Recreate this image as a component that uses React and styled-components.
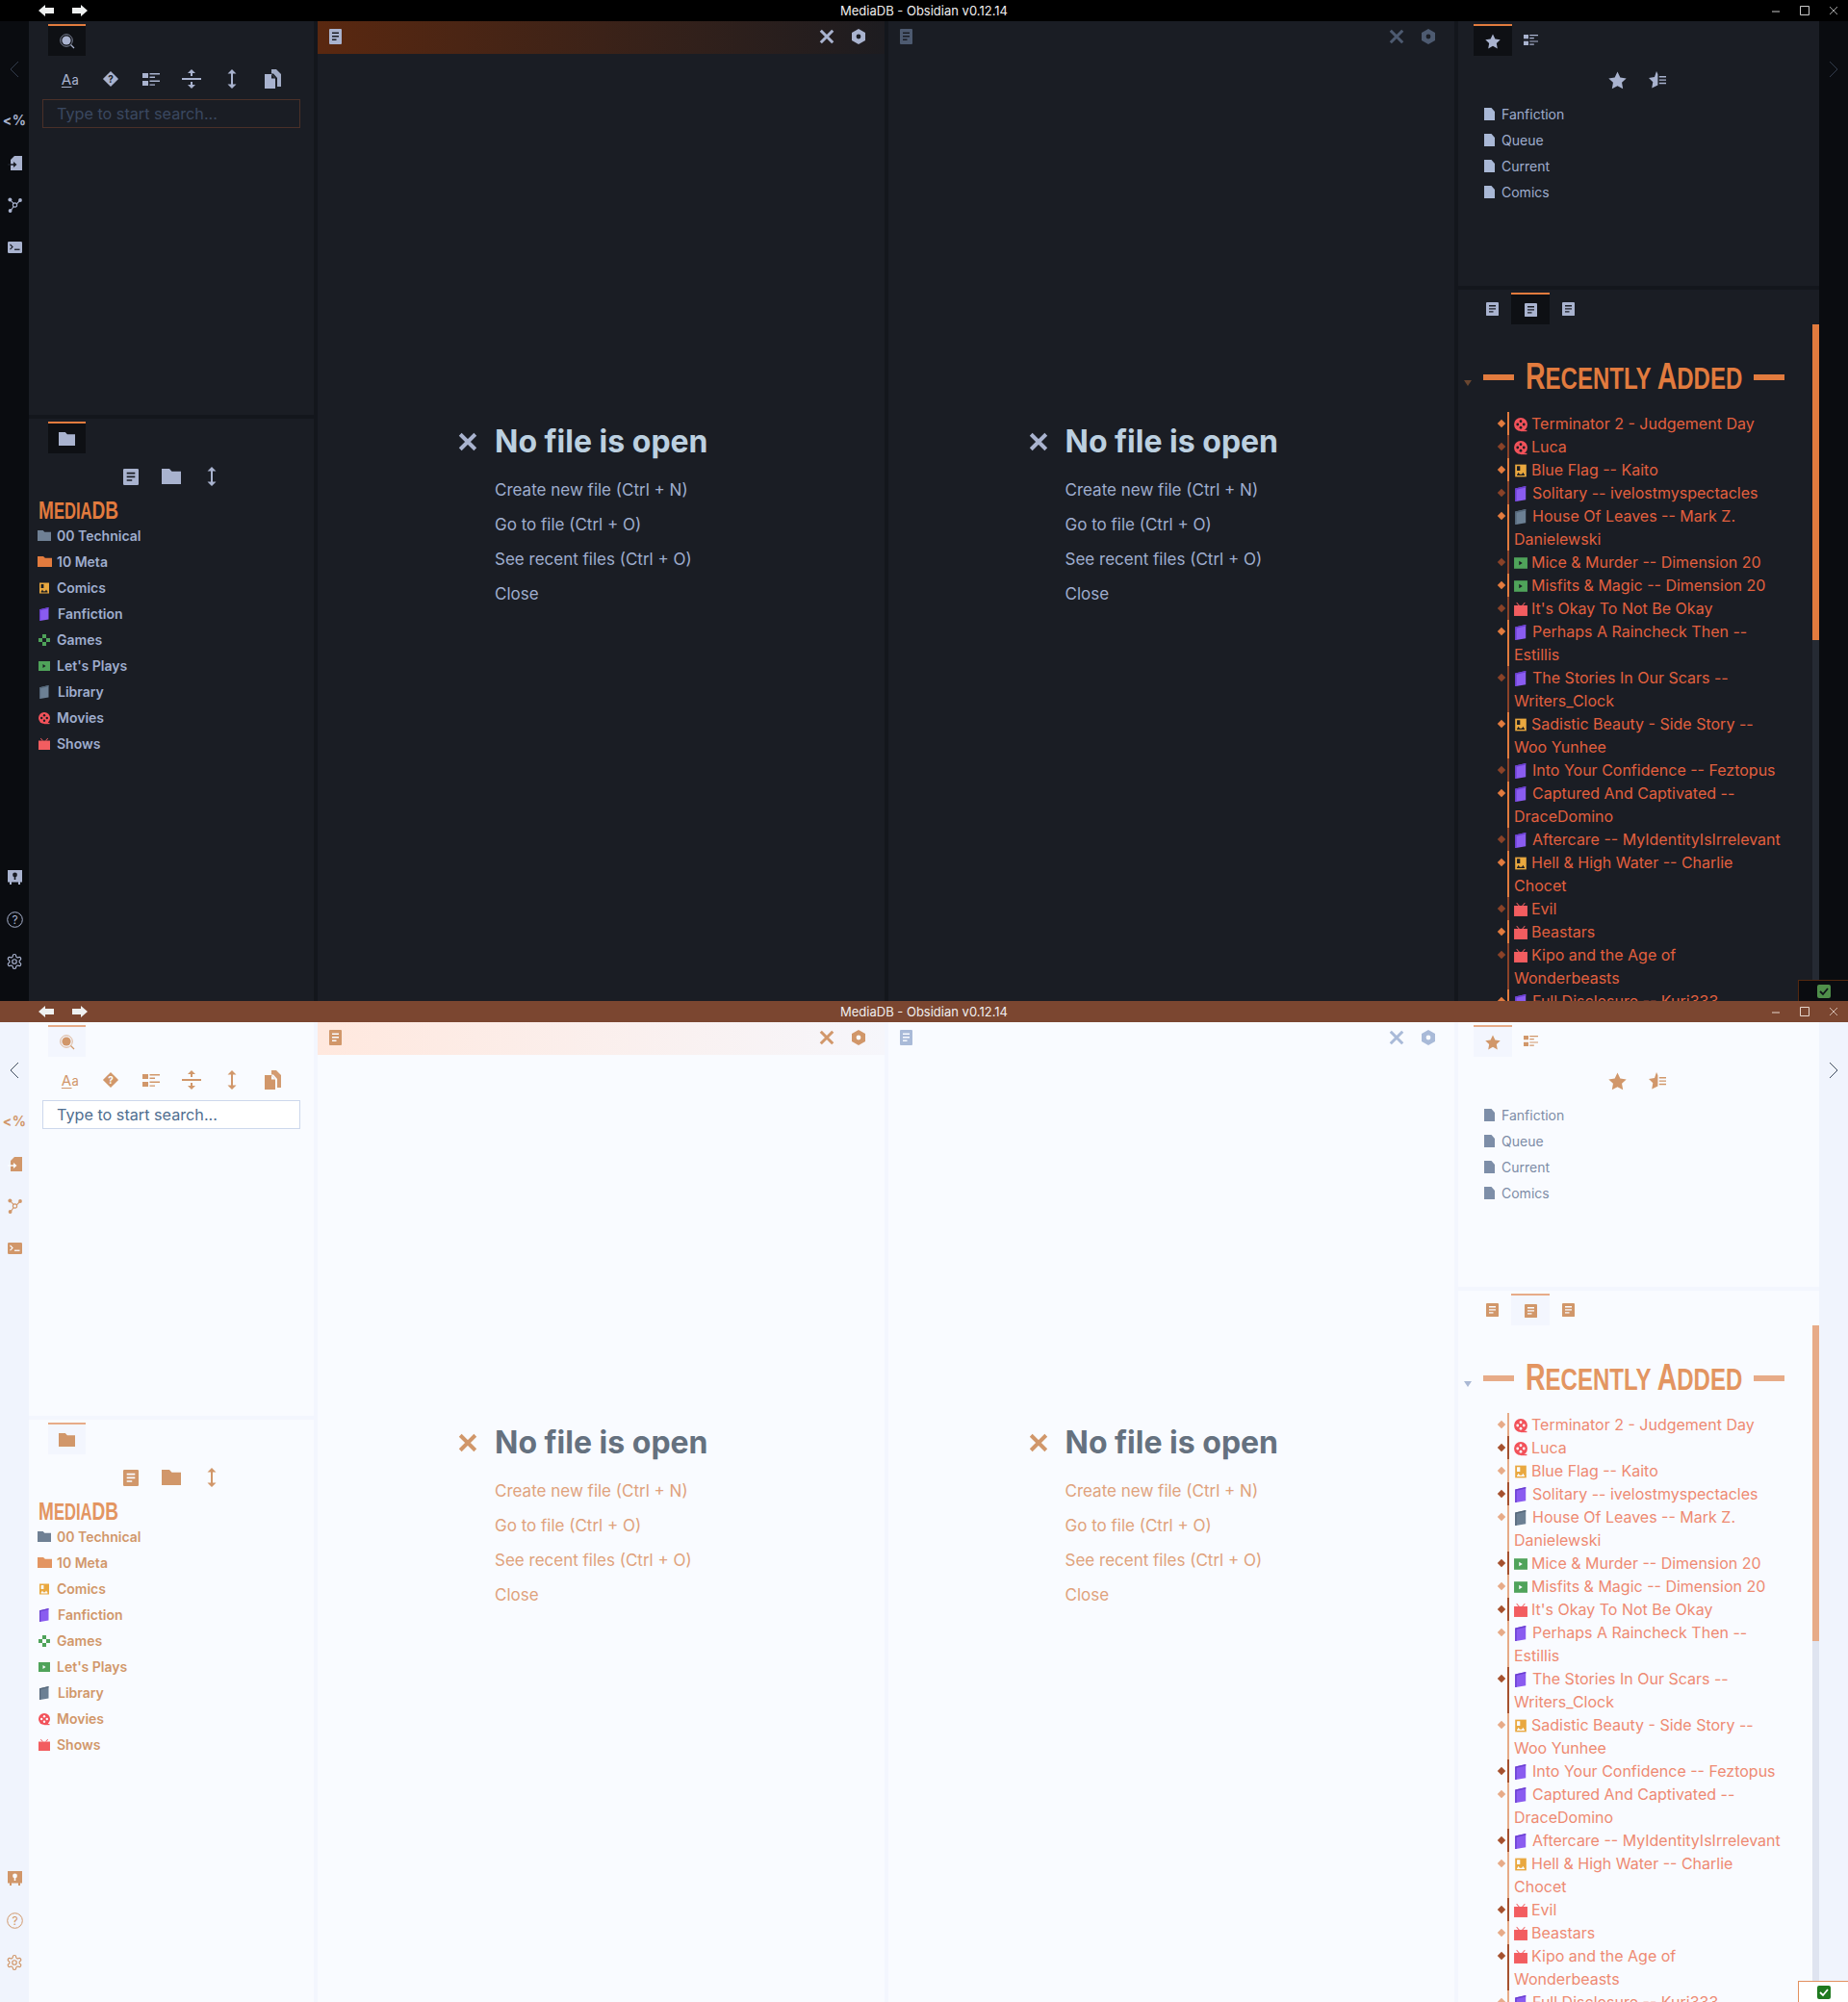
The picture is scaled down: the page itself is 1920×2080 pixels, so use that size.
import React from "react";
import styled, { createGlobalStyle, ThemeProvider } from "styled-components";

const dark = {
  title: "#000000", ribbon: "#0a0c10", bg: "#1a1d24", strip: "#0f1216", strip2: "#13161c", tabActive: "#0e1014",
  icon: "#a9b3cf", iconDim: "#4d5a70", chevron: "#323c4c", accent: "#e27b3e", accentDim: "#8a4228",
  text: "#9fadce", favIcon: "#a9b8d6", favText: "#9fadce", heading: "#bcd0e0", link: "#9fadce",
  listText: "#e2603f", h1: "#e27b3e", barH: "#e27b3e", caret: "#6a4630", thumb: "#e27b3e", track: "#252a33",
  inputBorder: "#4a3028", placeholder: "#3a4860", inputBg: "transparent",
  paneHead: "linear-gradient(90deg,#5a2810,#1d1c20)", statusBg: "#0a0c10", statusBorder: "#54280f", check: "#4f8f4a", checkMark: "#10161a",
  winCtl: "#c8c8c8", docFg: "#1a1d24", closeX: "#a9b3cf",
};
const light = {
  title: "#7b4630", ribbon: "#f0f4fd", bg: "#f9fbff", strip: "#f3f6fe", strip2: "#f3f6fe", tabActive: "#f3f6fe",
  icon: "#d1976a", iconDim: "#a9bad8", chevron: "#3d4a60", accent: "#e7ab88", accentDim: "#a5512f",
  text: "#d1976a", favIcon: "#7d8ea8", favText: "#7d8ca6", heading: "#65717f", link: "#e0a27c",
  listText: "#ee8a72", h1: "#e39561", barH: "#e7ab88", caret: "#aab8d4", thumb: "#e7ab88", track: "#dfe4f0",
  inputBorder: "#cdd8ec", placeholder: "#4f6e90", inputBg: "#ffffff",
  paneHead: "linear-gradient(90deg,#ffe8de,#f6f6fb)", statusBg: "#ffffff", statusBorder: "#e2905f", check: "#1f7a1f", checkMark: "#ffffff",
  winCtl: "#e6d6cc", docFg: "#f9fbff", closeX: "#d1976a",
};

const Global = createGlobalStyle`
  html, body { margin: 0; padding: 0; background: #f9fbff; }
  #root { width: 1920px; height: 2080px; overflow: hidden; }
  * { box-sizing: border-box; }
`;

const Win = styled.div`
  width: 1920px; height: 1040px; display: flex; flex-direction: column; overflow: hidden;
  font-family: Inter, "Liberation Sans", sans-serif; background: ${p => p.theme.bg};
`;
const TitleBar = styled.div`
  height: 22px; flex: none; position: relative; background: ${p => p.theme.title};
  display: flex; align-items: center; justify-content: center;
  color: #f0eeee; font: 13px Inter, "Liberation Sans", sans-serif;
`;
const NavGroup = styled.div`
  position: absolute; left: 40px; top: 5px; display: flex; gap: 19px; color: #eef0f0;
`;
const WinCtls = styled.div`
  position: absolute; right: 0; top: 0; height: 22px; display: flex; color: ${p => p.theme.winCtl};
`;
const WinCtl = styled.div`
  width: 30px; height: 22px; display: flex; align-items: center; justify-content: center;
`;
const Body = styled.div`
  flex: 1; display: flex; min-height: 0; position: relative;
`;
const Ribbon = styled.div`
  width: 30px; flex: none; background: ${p => p.theme.ribbon}; display: flex; flex-direction: column; align-items: center;
  padding-top: 41px; color: ${p => p.theme.icon};
`;
const Chevron = styled.div`
  height: 18px; color: ${p => p.theme.chevron}; margin-bottom: 34px; display: flex;
`;
const RibbonList = styled.div`
  display: flex; flex-direction: column; align-items: center; gap: 24px;
`;
const RibbonBottom = styled(RibbonList)`
  margin-top: auto; margin-bottom: 31px;
`;
const RibbonSlot = styled.div`
  height: 20px; display: flex; align-items: center; justify-content: center;
`;
const Tpl = styled.span`
  font: 700 14px/20px Inter, sans-serif; letter-spacing: .4px;
`;
const Side = styled.div`
  width: ${p => p.$w}px; flex: none; display: flex; flex-direction: column; background: ${p => p.theme.strip2};
`;
const Panel = styled.div`
  background: ${p => p.theme.bg}; position: relative; overflow: hidden;
  ${p => p.$h ? `height:${p.$h}px;flex:none;margin-bottom:4px;` : "flex:1;min-height:0;"}
`;
const Tabs = styled.div`
  display: flex; padding: ${p => p.$top}px 0 0 ${p => p.$left}px; height: ${p => p.$top + 33}px;
`;
const Tab = styled.div`
  width: ${p => p.$w || 39}px; height: 33px; display: flex; align-items: center; justify-content: center; color: ${p => p.theme.icon};
  ${p => p.$on ? `background:${p.theme.tabActive};border-top:2px solid ${p.theme.accent};` : ""}
`;
const ToolRow = styled.div`
  display: flex; color: ${p => p.theme.icon}; align-items: center; height: 24px;
  margin-top: ${p => p.$mt}px; padding-left: ${p => p.$pl}px; gap: ${p => p.$gap}px;
`;
const ToolSlot = styled.div`
  width: 20px; height: 24px; display: flex; align-items: center; justify-content: center; flex: none;
`;
const Aa = styled.span`
  display: inline-flex; align-items: baseline; font: 400 13px/1 Inter, sans-serif; letter-spacing: .3px;
  & b { font-weight: 400; font-size: 15px; text-decoration: underline; text-underline-offset: 2px; }
`;
const Search = styled.div`
  margin: 9px 0 0 14px; width: 268px; height: 30px; border: 1px solid ${p => p.theme.inputBorder}; background: ${p => p.theme.inputBg};
  padding: 0 0 0 14px; font: 400 16.2px/28px Inter, sans-serif; color: ${p => p.theme.placeholder};
`;
const VaultTitle = styled.div`
  margin: 11px 0 0 10px; height: 24px; color: ${p => p.theme.h1}; white-space: nowrap;
  font: 700 23px/24px "Liberation Sans", sans-serif; text-transform: uppercase;
`;
const VaultInner = styled.span`
  display: inline-block; transform: scaleX(.72); transform-origin: left center;
  & b { font-size: 26.5px; }
`;
const Tree = styled.div`
  margin-top: 1px; display: flex; flex-direction: column;
`;
const TreeRow = styled.div`
  height: 27px; display: flex; align-items: center; color: ${p => p.theme.text};
  font: 600 14px/27px Inter, sans-serif;
  padding-left: 9px;
`;
const TreeIcon = styled.span`
  width: ${p => p.$w}px; flex: none; display: flex; align-items: center;
`;
const FolderTint = styled.span`
  display: flex; color: ${p => p.$meta ? p.theme.h1 : "#6f8094"};
`;
const FavList = styled.div`
  margin-top: 10px; display: flex; flex-direction: column;
`;
const FavRow = styled.div`
  height: 27px; display: flex; align-items: center; gap: 7px; padding-left: 27px;
  font: 400 14px/27px Inter, sans-serif; color: ${p => p.theme.favText};
`;
const FavIcon = styled.span`
  display: flex; color: ${p => p.theme.favIcon};
`;
const Pane = styled.div`
  flex: 1; min-width: 0; display: flex; flex-direction: column; background: ${p => p.theme.bg};
`;
const Gutter = styled.div`
  width: 4px; flex: none; background: ${p => p.theme.strip2};
`;
const PaneHead = styled.div`
  height: 34px; flex: none; display: flex; align-items: center; padding: 0 20px 2px 12px; gap: 18px;
  color: ${p => p.$active ? p.theme.icon : p.theme.iconDim};
  background: ${p => p.$active ? p.theme.paneHead : "transparent"};
`;
const PaneDoc = styled.span`
  margin-right: auto; display: flex;
`;
const Empty = styled.div`
  padding: 0 0 0 184px; margin-top: 381px; position: relative;
`;
const EmptyTitle = styled.div`
  font: 700 32px/44px Inter, sans-serif; color: ${p => p.theme.heading};
`;
const EmptyX = styled.span`
  position: absolute; left: 146px; top: 12px; display: flex; color: ${p => p.theme.closeX};
`;
const EmptyLinks = styled.div`
  margin-top: 10px; display: flex; flex-direction: column;
`;
const EmptyLink = styled.div`
  font: 400 17px/36px Inter, sans-serif; color: ${p => p.theme.link};
`;
const Heading = styled.div`
  margin-top: 32px; position: relative; display: flex; align-items: center; padding-left: 26px; height: 46px;
  color: ${p => p.theme.h1};
`;
const Caret = styled.span`
  position: absolute; left: 6px; top: 26px; width: 0; height: 0;
  border-left: 4px solid transparent; border-right: 4px solid transparent; border-top: 6px solid ${p => p.theme.caret};
`;
const Bar = styled.span`
  width: 32px; height: 6px; background: ${p => p.theme.barH}; flex: none;
`;
const HeadingText = styled.span`
  margin: 0 12px; width: 225px; flex: none; white-space: nowrap; overflow: visible;
  font: 700 32px/46px "Liberation Sans", sans-serif; text-transform: uppercase;
`;
const HeadingInner = styled.span`
  display: inline-block; transform: scaleX(.75); transform-origin: left center;
  & b { font-size: 38px; }
`;
const List = styled.ul`
  list-style: none; margin: 13px 0 0 0; padding: 0 0 0 51px; width: 338px;
`;
const Item = styled.li`
  position: relative; padding-left: 5px; border-left: 2px solid ${p => p.$odd ? p.theme.accent : p.theme.accentDim};
  font: 400 16px/24px Inter, sans-serif; color: ${p => p.theme.listText};
  &::before {
    content: ""; position: absolute; left: -11px; top: 9px; width: 6px; height: 6px; transform: rotate(45deg);
    background: ${p => p.$odd ? p.theme.accent : p.theme.accentDim};
  }
`;
const ItemIcon = styled.span`
  display: inline-block; width: ${p => p.$w}px; height: 14px; margin-right: 4px; vertical-align: -2px;
  & svg { transform: scale(1.16); transform-origin: center; overflow: visible; }
`;
const Track = styled.div`
  position: absolute; right: 0; top: 36px; bottom: 0; width: 7px; background: ${p => p.theme.track};
`;
const Thumb = styled.div`
  height: 328px; background: ${p => p.theme.thumb};
`;
const Status = styled.div`
  position: absolute; right: 0; bottom: 0; width: 52px; height: 22px; background: ${p => p.theme.statusBg};
  border-top: 1px solid ${p => p.theme.statusBorder}; border-left: 1px solid ${p => p.theme.statusBorder};
  display: flex; align-items: center; padding-left: 19px;
`;
const Check = styled.span`
  width: 14px; height: 14px; border-radius: 2px; background: ${p => p.theme.check}; color: ${p => p.theme.checkMark};
  display: flex; align-items: center; justify-content: center;
`;

/* icons */
const S = ({ w = 16, h = 16, vb, children, ...r }) => (
  <svg width={w} height={h} viewBox={vb || `0 0 ${w} ${h}`} fill="currentColor" style={{ display: "block" }} {...r}>{children}</svg>
);
const Doc = ({ w = 13, h = 16 }) => (
  <S w={w} h={h} vb="0 0 13 16" preserveAspectRatio="none">
    <rect width="13" height="16" rx="1" />
    <path d="M3 3.5h7v1.6H3zM3 7h7v1.6H3zM3 10.5h4.5v1.6H3z" fill="var(--doc-fg,#1a1d24)" />
  </S>
);
const SearchI = () => (
  <S w={16} h={16} vb="0 0 16 16">
    <circle cx="7" cy="7" r="4.6" />
    <circle cx="7" cy="7" r="6.3" fill="none" stroke="currentColor" strokeWidth="1" opacity=".7" />
    <path d="M11.5 11.5 15 15" stroke="currentColor" strokeWidth="1.2" />
  </S>
);
const Help = ({ fg }) => (
  <S w={18} h={18}>
    <path d="M9 1l7.6 7.6a.6.6 0 0 1 0 .8L9 17 1.4 9.4a.6.6 0 0 1 0-.8z" />
    <text x="9" y="13" fontSize="10" fontWeight="700" textAnchor="middle" fill={fg} fontFamily="Inter">?</text>
  </S>
);
const Outline = ({ w = 18, h = 15 }) => (
  <S w={w} h={h} vb="0 0 18 15">
    <path d="M0 1h6v5H0zM0 9h6v5H0zM7.5 1H18v1.4H7.5zM7.5 4.6H13V6H7.5zM7.5 8.6H18V10H7.5zM7.5 12.4H13v1.4H7.5z" />
  </S>
);
const Collapse = () => (
  <S w={20} h={20}>
    <path d="M0 9h20v2H0zM10 0l4 4h-3v3H9V4H6zM10 20l-4-4h3v-3h2v3h3z" />
  </S>
);
const Expand = () => (
  <S w={10} h={20}>
    <path d="M5 0l4.5 4.5H6v11h3.5L5 20 .5 15.5H4v-11H.5z" />
  </S>
);
const Copies = ({ fg }) => (
  <S w={17} h={20}>
    <path d="M7 0h5l5 5v13h-4V9L9 4.5H7z" opacity=".95" />
    <path d="M0 5h7l4 4.5V20H0z" />
    <path d="M7 5.2 11 9.6H7z" fill={fg} />
  </S>
);
const Folder = ({ w = 20, h = 15 }) => (
  <S w={w} h={h} vb="0 0 20 15" preserveAspectRatio="none">
    <path d="M0 0h8l2.5 2.5H20V15H0z" />
  </S>
);
const Star = ({ size = 18 }) => (
  <S w={size} h={size} vb="0 0 18 18">
    <path d="M9 .5l2.7 5.6 6 .9-4.4 4.2 1.1 6.1L9 14.4l-5.4 2.9 1.1-6.1L.3 7l6-.9z" />
  </S>
);
const StarList = () => (
  <S w={18} h={18}>
    <path d="M8 0l1.4 3v11.6L3.2 17.6l1.1-6.4L0 7l6-.9z" />
    <path d="M10.8 5H18v1.4h-7.2zM10.8 8.4H18v1.4h-7.2zM10.8 11.8H18v1.4h-7.2z" />
  </S>
);
const FileI = () => (
  <S w={11} h={13}>
    <path d="M0 0h7.5L11 4v9H0z" />
  </S>
);
const XI = ({ size = 18, sw = 3.4 }) => (
  <S w={size} h={size} vb="0 0 18 18">
    <path d="M2 2l14 14M16 2 2 16" stroke="currentColor" strokeWidth={sw} fill="none" />
  </S>
);
const Hex = ({ fg }) => (
  <S w={14} h={16}>
    <path d="M7 0l7 4v8l-7 4-7-4V4z" />
    <circle cx="7" cy="8" r="2.4" fill={fg} />
  </S>
);
const Back = () => <S w={16} h={12}><path d="M0 6l7-6v3h9v6H7v3z" /></S>;
const Fwd = () => <S w={16} h={12}><path d="M16 6 9 0v3H0v6h9v3z" /></S>;
const ChevL = () => <S w={10} h={18}><path d="M9 1 1 9l8 8" stroke="currentColor" strokeWidth="1" fill="none" /></S>;
const ChevR = () => <S w={10} h={18}><path d="M1 1l8 8-8 8" stroke="currentColor" strokeWidth="1" fill="none" /></S>;
const Importer = ({ fg }) => (
  <S w={15} h={15}>
    <path d="M3 4 7 0h8v15H3z" />
    <path d="M0 8.2h6V6l3.5 3L6 12V9.8H0z" fill={fg} />
  </S>
);
const Graph = () => (
  <S w={15} h={16}>
    <g stroke="currentColor" strokeWidth="1.1" fill="none"><circle cx="7.5" cy="8" r="2.1" /><path d="M2.5 2.5 6 6.4M12.5 3.5 9.4 6.8M3 14l3-4.2" /></g>
    <circle cx="2.4" cy="2.4" r="2" /><circle cx="13" cy="3" r="1.9" /><circle cx="2.6" cy="14" r="1.9" />
  </S>
);
const Term = ({ fg }) => (
  <S w={15} h={12}>
    <rect width="15" height="12" rx="1.2" />
    <path d="M2.5 3l2.5 2.6L2.5 8.2" stroke={fg} strokeWidth="1.2" fill="none" />
    <path d="M7 7.6h5.5v1.3H7z" fill={fg} />
  </S>
);
const Vault = ({ fg }) => (
  <S w={15} h={15}>
    <path d="M0 0h15v12.5h-2V15h-2v-2.5H4V15H2v-2.5H0z" />
    <circle cx="7.5" cy="5" r="2.4" fill={fg} />
    <path d="M6.7 6.5h1.6v3.5H6.7z" fill={fg} />
  </S>
);
const HelpC = () => (
  <S w={17} h={17}>
    <circle cx="8.5" cy="8.5" r="7.8" fill="none" stroke="currentColor" strokeWidth="1" />
    <text x="8.5" y="13" fontSize="12" textAnchor="middle" fontFamily="Inter">?</text>
  </S>
);
const Gear = () => (
  <S w={18} h={18} vb="0 0 24 24" fill="none" stroke="currentColor" strokeWidth="1.6">
    <path d="M12.2 2h-.4a2 2 0 0 0-2 2v.2a2 2 0 0 1-1 1.7l-.4.3a2 2 0 0 1-2 0l-.2-.1a2 2 0 0 0-2.7.7l-.2.4a2 2 0 0 0 .7 2.7l.2.1a2 2 0 0 1 1 1.7v.5a2 2 0 0 1-1 1.7l-.2.1a2 2 0 0 0-.7 2.7l.2.4a2 2 0 0 0 2.7.7l.2-.1a2 2 0 0 1 2 0l.4.3a2 2 0 0 1 1 1.7v.2a2 2 0 0 0 2 2h.4a2 2 0 0 0 2-2v-.2a2 2 0 0 1 1-1.7l.4-.3a2 2 0 0 1 2 0l.2.1a2 2 0 0 0 2.7-.7l.2-.4a2 2 0 0 0-.7-2.7l-.2-.1a2 2 0 0 1-1-1.7v-.5a2 2 0 0 1 1-1.7l.2-.1a2 2 0 0 0 .7-2.7l-.2-.4a2 2 0 0 0-2.7-.7l-.2.1a2 2 0 0 1-2 0l-.4-.3a2 2 0 0 1-1-1.7V4a2 2 0 0 0-2-2z" />
    <circle cx="12" cy="12" r="3" />
  </S>
);

const hole = "var(--doc-fg,#1a1d24)";
const Comic = () => (
  <S w={14} h={14} vb="0 0 14 14">
    <path d="M2 1.5h10v11H2z" fill="#e9a83f" />
    <path d="M3.6 3h2.8v4H3.6zM3.6 10.2h6.8v1.2H3.6zM5 8.6l1 1.6H4zM9 8.6l1 1.6H8z" fill={hole} />
  </S>
);
const Book = ({ c = "#8a5cf0", top = "#6a3fd0" }) => (
  <S w={14} h={14} vb="0 0 14 14">
    <path d="M2 2.2 11.5 0V12.4L2.6 14H2z" fill={c} />
    <path d="M2 2.2 11.5 0V1.3L3.2 3.3V14H2z" fill={top} />
  </S>
);
const Pad = () => (
  <S w={14} h={14} vb="0 0 14 14">
    <path d="M5 1h4v4H5zM5 9h4v4H5zM1 5h4v4H1zM9 5h4v4H9z" fill="#4fa35a" />
    <rect x="6" y="6" width="2" height="2" fill={hole} />
  </S>
);
const Play = () => (
  <S w={14} h={14} vb="0 0 14 14">
    <path d="M1 2h12v10H1z" fill="#4fa35a" />
    <path d="M5.5 5l3 2-3 2z" fill={hole} />
  </S>
);
const Reel = () => (
  <S w={14} h={14} vb="0 0 14 14">
    <circle cx="7" cy="7" r="6" fill="#f2525a" />
    <path d="M7 12h5.5v1.2H7z" fill="#f2525a" />
    <g fill={hole}><circle cx="7" cy="4.2" r="1.2" /><circle cx="7" cy="9.8" r="1.2" /><circle cx="4.2" cy="7" r="1.2" /><circle cx="9.8" cy="7" r="1.2" /></g>
  </S>
);
const Tv = () => (
  <S w={14} h={14} vb="0 0 14 14">
    <path d="M1 3.5h12V13H1z" fill="#f25d60" />
    <path d="M3.5 0.8 6 3.5H5L3 1.4zM10.5.8 8 3.5h1l2-2.1z" fill="#f25d60" />
  </S>
);
const kinds = {
  reel: <Reel />, comic: <Comic />, book: <Book />, shelf: <Book c="#6c8094" top="#55677a" />,
  play: <Play />, tv: <Tv />, pad: <Pad />,
};
const isBook = k => k === "book" || k === "shelf";

const tree = [
  ["folderGrey", "00 Technical"], ["folderOrange", "10 Meta"], ["comic", "Comics"], ["book", "Fanfiction"],
  ["pad", "Games"], ["play", "Let's Plays"], ["shelf", "Library"], ["reel", "Movies"], ["tv", "Shows"],
];
const favs = ["Fanfiction", "Queue", "Current", "Comics"];
const recent = [
  ["reel", "Terminator 2 - Judgement Day"], ["reel", "Luca"], ["comic", "Blue Flag -- Kaito"],
  ["book", "Solitary -- ivelostmyspectacles"], ["shelf", "House Of Leaves -- Mark Z. Danielewski"],
  ["play", "Mice & Murder -- Dimension 20"], ["play", "Misfits & Magic -- Dimension 20"], ["tv", "It's Okay To Not Be Okay"],
  ["book", "Perhaps A Raincheck Then -- Estillis"], ["book", "The Stories In Our Scars -- Writers_Clock"],
  ["comic", "Sadistic Beauty - Side Story -- Woo Yunhee"], ["book", "Into Your Confidence -- Feztopus"],
  ["book", "Captured And Captivated -- DraceDomino"], ["book", "Aftercare -- MyIdentityIsIrrelevant"],
  ["comic", "Hell & High Water -- Charlie Chocet"], ["tv", "Evil"], ["tv", "Beastars"],
  ["tv", "Kipo and the Age of Wonderbeasts"], ["book", "Full Disclosure -- Kuri333"],
];
const links = ["Create new file (Ctrl + N)", "Go to file (Ctrl + O)", "See recent files (Ctrl + O)", "Close"];

const TreeI = ({ k }) => {
  if (k === "folderGrey") return <FolderTint><Folder w={14} h={11} /></FolderTint>;
  if (k === "folderOrange") return <FolderTint $meta><Folder w={15} h={11} /></FolderTint>;
  return kinds[k];
};

const EmptyPane = ({ active, bg }) => (
  <Pane>
    <PaneHead $active={active}>
      <PaneDoc><Doc /></PaneDoc>
      <XI size={16} />
      <Hex fg={bg} />
    </PaneHead>
    <Empty>
      <EmptyX><XI size={20} sw={3.6} /></EmptyX>
      <EmptyTitle>No file is open</EmptyTitle>
      <EmptyLinks>{links.map(l => <EmptyLink key={l}>{l}</EmptyLink>)}</EmptyLinks>
    </Empty>
  </Pane>
);

const Window = ({ theme }) => {
  const fg = theme.docFg;
  return (
    <ThemeProvider theme={theme}>
      <Win style={{ "--doc-fg": fg }}>
        <TitleBar>
          <NavGroup><Back /><Fwd /></NavGroup>
          MediaDB - Obsidian v0.12.14
          <WinCtls>
            <WinCtl><S w={10} h={10}><path d="M1 5.5h8v1H1z" /></S></WinCtl>
            <WinCtl><S w={10} h={10}><path d="M.5.5h9v9h-9z" fill="none" stroke="currentColor" /></S></WinCtl>
            <WinCtl><S w={10} h={10}><path d="M1 1l8 8M9 1 1 9" stroke="currentColor" fill="none" strokeWidth=".8" /></S></WinCtl>
          </WinCtls>
        </TitleBar>
        <Body>
          <Ribbon>
            <Chevron><ChevL /></Chevron>
            <RibbonList>
              <RibbonSlot><Tpl>&lt;%</Tpl></RibbonSlot>
              <RibbonSlot><Importer fg={fg} /></RibbonSlot>
              <RibbonSlot><Graph /></RibbonSlot>
              <RibbonSlot><Term fg={fg} /></RibbonSlot>
            </RibbonList>
            <RibbonBottom>
              <RibbonSlot><Vault fg={fg} /></RibbonSlot>
              <RibbonSlot><HelpC /></RibbonSlot>
              <RibbonSlot><Gear /></RibbonSlot>
            </RibbonBottom>
          </Ribbon>
          <Side $w={296}>
            <Panel $h={409}>
              <Tabs $top={3} $left={20}><Tab $on><SearchI /></Tab></Tabs>
              <ToolRow $mt={12} $pl={33} $gap={22}>
                <ToolSlot><Aa><b>A</b>a</Aa></ToolSlot>
                <ToolSlot><Help fg={fg} /></ToolSlot>
                <ToolSlot><Outline /></ToolSlot>
                <ToolSlot><Collapse /></ToolSlot>
                <ToolSlot><Expand /></ToolSlot>
                <ToolSlot><Copies fg={fg} /></ToolSlot>
              </ToolRow>
              <Search>Type to start search...</Search>
            </Panel>
            <Panel>
              <Tabs $top={3} $left={20}><Tab $on><Folder w={17} h={14} /></Tab></Tabs>
              <ToolRow $mt={12} $pl={96} $gap={22}>
                <ToolSlot><Doc w={16} h={17} /></ToolSlot>
                <ToolSlot><Folder w={20} h={16} /></ToolSlot>
                <ToolSlot><Expand /></ToolSlot>
              </ToolRow>
              <VaultTitle><VaultInner><b>M</b>edia<b>DB</b></VaultInner></VaultTitle>
              <Tree>
                {tree.map(([k, t]) => (
                  <TreeRow key={t}><TreeIcon $w={isBook(k) ? 21 : 20}><TreeI k={k} /></TreeIcon>{t}</TreeRow>
                ))}
              </Tree>
            </Panel>
          </Side>
          <Gutter />
          <EmptyPane active bg={fg} />
          <Gutter />
          <EmptyPane bg={fg} />
          <Gutter />
          <Side $w={375}>
            <Panel $h={275}>
              <Tabs $top={3} $left={16}>
                <Tab $on $w={40}><Star size={16} /></Tab>
                <Tab $w={39}><Outline w={15} h={13} /></Tab>
              </Tabs>
              <ToolRow $mt={13} $pl={155} $gap={22}>
                <ToolSlot><Star size={19} /></ToolSlot>
                <ToolSlot><StarList /></ToolSlot>
              </ToolRow>
              <FavList>
                {favs.map(t => <FavRow key={t}><FavIcon><FileI /></FavIcon>{t}</FavRow>)}
              </FavList>
            </Panel>
            <Panel>
              <Tabs $top={3} $left={15}>
                <Tab $w={40}><Doc h={14} /></Tab>
                <Tab $on $w={40}><Doc h={14} /></Tab>
                <Tab $w={39}><Doc h={14} /></Tab>
              </Tabs>
              <Heading>
                <Caret />
                <Bar />
                <HeadingText><HeadingInner><b>R</b>ecently <b>A</b>dded</HeadingInner></HeadingText>
                <Bar />
              </Heading>
              <List>
                {recent.map(([k, t], i) => (
                  <Item key={t} $odd={i % 2 === 0}><ItemIcon $w={isBook(k) ? 15 : 14}>{kinds[k]}</ItemIcon>{t}</Item>
                ))}
              </List>
              <Track><Thumb /></Track>
            </Panel>
          </Side>
          <Ribbon>
            <Chevron><ChevR /></Chevron>
          </Ribbon>
          <Status><Check><S w={10} h={10}><path d="M1 5l3 3 5-6" stroke="currentColor" strokeWidth="1.8" fill="none" /></S></Check></Status>
        </Body>
      </Win>
    </ThemeProvider>
  );
};

export default function App() {
  return (
    <>
      <Global />
      <Window theme={dark} />
      <Window theme={light} />
    </>
  );
}
